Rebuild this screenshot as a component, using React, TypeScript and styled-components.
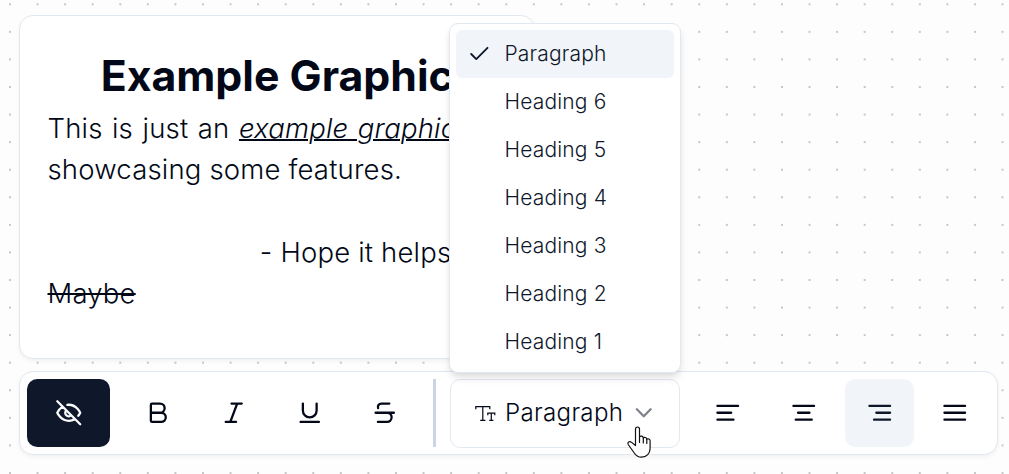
import React from "react";
import styled, { createGlobalStyle, css } from "styled-components";

const GlobalStyle = createGlobalStyle`
  * { box-sizing: border-box; }
  body {
    margin: 0;
    overflow: hidden;
    background: #fdfdfd;
    font-family: Inter, "Liberation Sans", sans-serif;
    font-weight: 300;
    color: #020817;
  }
  p, h1, ul { margin: 0; padding: 0; font-weight: inherit; }
`;

const Canvas = styled.main`
  position: relative;
  display: flex;
  flex-direction: column;
  align-items: flex-start;
  gap: 12px;
  height: 474px;
  padding: 15px 0 0 19px;
  overflow: hidden;
`;

const Grid = styled.svg`
  position: absolute;
  inset: 0;
  width: 100%;
  height: 100%;
`;

const panel = css`
  position: relative;
  background: #fff;
  border: 1px solid #e2e8f0;
  border-radius: 14px;
  box-shadow: 0 2px 4px rgba(0, 0, 0, 0.05);
`;

const TextNode = styled.article`
  ${panel}
  width: 516px;
  height: 344px;
  padding: 39px 27px 0 27.5px;
  font-size: 27.5px;
  line-height: 41.3px;
  letter-spacing: 0.18px;
`;

const Title = styled.h1`
  font-size: 42.8px;
  line-height: 41.3px;
  font-weight: 700;
  letter-spacing: 0;
  text-align: center;
  padding-bottom: 11.6px;
`;

const Line = styled.p<{ $align?: "left" | "right"; $spread?: boolean }>`
  min-height: 41.3px;
  text-align: ${(p) => p.$align ?? "left"};
  word-spacing: ${(p) => (p.$spread ? 1.6 : 0)}px;
  white-space: nowrap;
`;

const Emphasis = styled.em`
  text-decoration: underline;
  text-decoration-thickness: 2px;
`;

const Struck = styled.s`
  text-decoration-thickness: 2px;
`;

const Toolbar = styled.div`
  ${panel}
  display: flex;
  align-items: center;
  gap: 6.88px;
  width: 978.5px;
  height: 84px;
  padding: 0 7px;
`;

const ToolButton = styled.button<{ $tone?: "dark" | "active" }>`
  display: flex;
  flex: none;
  align-items: center;
  justify-content: center;
  width: ${(p) => (p.$tone === "dark" ? 82.6 : 68.8)}px;
  height: 68.8px;
  margin-right: ${(p) => (p.$tone === "dark" ? 7.3 : 0)}px;
  padding: 0;
  border: 0;
  border-radius: 10.3px;
  color: ${(p) => (p.$tone === "dark" ? "#f8fafc" : p.$tone === "active" ? "#0f172a" : "#020817")};
  background: ${(p) => (p.$tone === "dark" ? "#0f172a" : p.$tone === "active" ? "#f1f5f9" : "transparent")};
`;

const Divider = styled.span`
  flex: none;
  width: 2.4px;
  height: 68.8px;
  margin: 0 7.4px 0 6.9px;
  background: #cbd5e1;
`;

const SelectWrap = styled.div`
  position: relative;
  flex: none;
  margin-right: 7.2px;
`;

const SelectTrigger = styled.button`
  display: flex;
  align-items: center;
  width: 229.5px;
  height: 69px;
  padding: 0 20px 0 24px;
  border: 1px solid #e2e8f0;
  border-radius: 10.3px;
  background: #fff;
  color: #020817;
  font: 300 24.1px/34px Inter, sans-serif;
  letter-spacing: 0.32px;
`;

const SelectLabel = styled.span`
  margin: 0 7px 0 9px;
`;

const Chevron = styled.span`
  display: flex;
  opacity: 0.5;
`;

const Menu = styled.ul`
  position: absolute;
  left: -0.6px;
  bottom: 75px;
  width: 232px;
  padding: 6px;
  list-style: none;
  background: #fff;
  border: 1px solid #e2e8f0;
  border-radius: 9px;
  box-shadow: 0 6px 9px -1.5px rgba(0, 0, 0, 0.1), 0 3px 6px -3px rgba(0, 0, 0, 0.1);
`;

const MenuItem = styled.li<{ $selected: boolean }>`
  display: flex;
  align-items: center;
  height: 48px;
  border-radius: 6px;
  font-size: 21px;
  letter-spacing: 0.18px;
  color: #0f172a;
  background: ${(p) => (p.$selected ? "#f1f5f9" : "transparent")};
`;

const CheckSlot = styled.span`
  display: flex;
  align-items: center;
  justify-content: center;
  width: 48px;
  padding-right: 2px;
`;

const Pointer = styled.svg`
  position: absolute;
  left: 626px;
  top: 425px;
`;

const Icon = ({ d, size = 27.5 }: { d: string; size?: number }) => (
  <svg
    width={size}
    height={size}
    viewBox="0 0 24 24"
    fill="none"
    stroke="currentColor"
    strokeWidth="2"
    strokeLinecap="round"
    strokeLinejoin="round"
  >
    <path d={d} />
  </svg>
);

const icons = {
  eyeOff:
    "M9.88 9.88a3 3 0 1 0 4.24 4.24M10.73 5.08A10.43 10.43 0 0 1 12 5c7 0 10 7 10 7a13.16 13.16 0 0 1-1.67 2.68M6.61 6.61A13.526 13.526 0 0 0 2 12s3 7 10 7a9.74 9.74 0 0 0 5.39-1.61M2 2l20 20",
  bold: "M6 12h9a4 4 0 0 1 0 8H7a1 1 0 0 1-1-1V5a1 1 0 0 1 1-1h7a4 4 0 0 1 0 8",
  italic: "M19 4h-9M14 20H5M15 4L9 20",
  underline: "M6 4v6a6 6 0 0 0 12 0V4M4 20h16",
  strike: "M16 4H9a3 3 0 0 0-2.83 4M14 12a4 4 0 0 1 0 8H6M4 12h16",
  left: "M21 6H3M15 12H3M17 18H3",
  center: "M21 6H3M17 12H7M19 18H5",
  right: "M21 6H3M21 12H9M21 18H7",
  justify: "M3 6h18M3 12h18M3 18h18",
  chevron: "M6 9l6 6 6-6",
};

const TypeIcon = () => (
  <svg width="21" height="17" viewBox="0 0 21 17" fill="none" stroke="currentColor" strokeWidth="1.2">
    <path d="M0.8 4.3V1.6h14v2.7M7.8 1.6v13.5M5.2 15.4h5.2" />
    <path d="M12.8 10.2V8.1h7v2.1M16.3 8.1v7.2M14.2 15.4h4.2" />
  </svg>
);

const CheckIcon = () => (
  <svg width="22.5" height="22.5" viewBox="0 0 24 24" fill="none" stroke="currentColor" strokeWidth="2" strokeLinecap="round" strokeLinejoin="round">
    <path d="M3.4 12.8l5.4 5.4L20.8 6.2" />
  </svg>
);

const options = ["Paragraph", "Heading 6", "Heading 5", "Heading 4", "Heading 3", "Heading 2", "Heading 1"];

export default function App() {
  return (
    <>
      <GlobalStyle />
      <Canvas>
        <Grid>
          <defs>
            <pattern id="dots" x="-3.8" y="-9.5" width="27.57" height="27.57" patternUnits="userSpaceOnUse">
              <circle cx="13.8" cy="13.8" r="0.95" fill="#b1b1b7" />
            </pattern>
          </defs>
          <rect width="100%" height="100%" fill="url(#dots)" />
        </Grid>
        <TextNode>
          <Title>Example Graphic</Title>
          <Line $spread>
            This is just an <Emphasis>example graphic</Emphasis>
          </Line>
          <Line>showcasing some features.</Line>
          <Line />
          <Line $align="right">- Hope it helps you</Line>
          <Line>
            <Struck>Maybe</Struck>
          </Line>
        </TextNode>
        <Toolbar>
          <ToolButton $tone="dark"><Icon d={icons.eyeOff} /></ToolButton>
          <ToolButton><Icon d={icons.bold} /></ToolButton>
          <ToolButton><Icon d={icons.italic} /></ToolButton>
          <ToolButton><Icon d={icons.underline} /></ToolButton>
          <ToolButton><Icon d={icons.strike} /></ToolButton>
          <Divider />
          <SelectWrap>
            <SelectTrigger>
              <TypeIcon />
              <SelectLabel>Paragraph</SelectLabel>
              <Chevron><Icon d={icons.chevron} /></Chevron>
            </SelectTrigger>
            <Menu>
              {options.map((name, i) => (
                <MenuItem key={name} $selected={i === 0}>
                  <CheckSlot>{i === 0 && <CheckIcon />}</CheckSlot>
                  {name}
                </MenuItem>
              ))}
            </Menu>
          </SelectWrap>
          <ToolButton><Icon d={icons.left} /></ToolButton>
          <ToolButton><Icon d={icons.center} /></ToolButton>
          <ToolButton $tone="active"><Icon d={icons.right} /></ToolButton>
          <ToolButton><Icon d={icons.justify} /></ToolButton>
        </Toolbar>
        <Pointer width="28" height="34" viewBox="0 0 28 34" fill="#fff" stroke="#111" strokeWidth="1.2" strokeLinejoin="round" strokeLinecap="round">
          <path d="M9.5 20.5V4.1c0-2.8 4-2.8 4 0v7.8c1-1.4 3.6-.9 3.8 1 1.1-1 3.3-.5 3.5 1.2 1.4-.8 3.3 0 3.3 1.9v7.5c0 4.6-3.5 8.700-8.600 8.700-3.300 0-5.600-1.500-7.600-4.700L2.200 19.500c-1.300-2.300 1.300-3.800 3.400-2.100z" />
          <path d="M13.5 11.9v5.6M17.3 12.9v5M20.8 14.1v4.4" fill="none" />
        </Pointer>
      </Canvas>
    </>
  );
}
